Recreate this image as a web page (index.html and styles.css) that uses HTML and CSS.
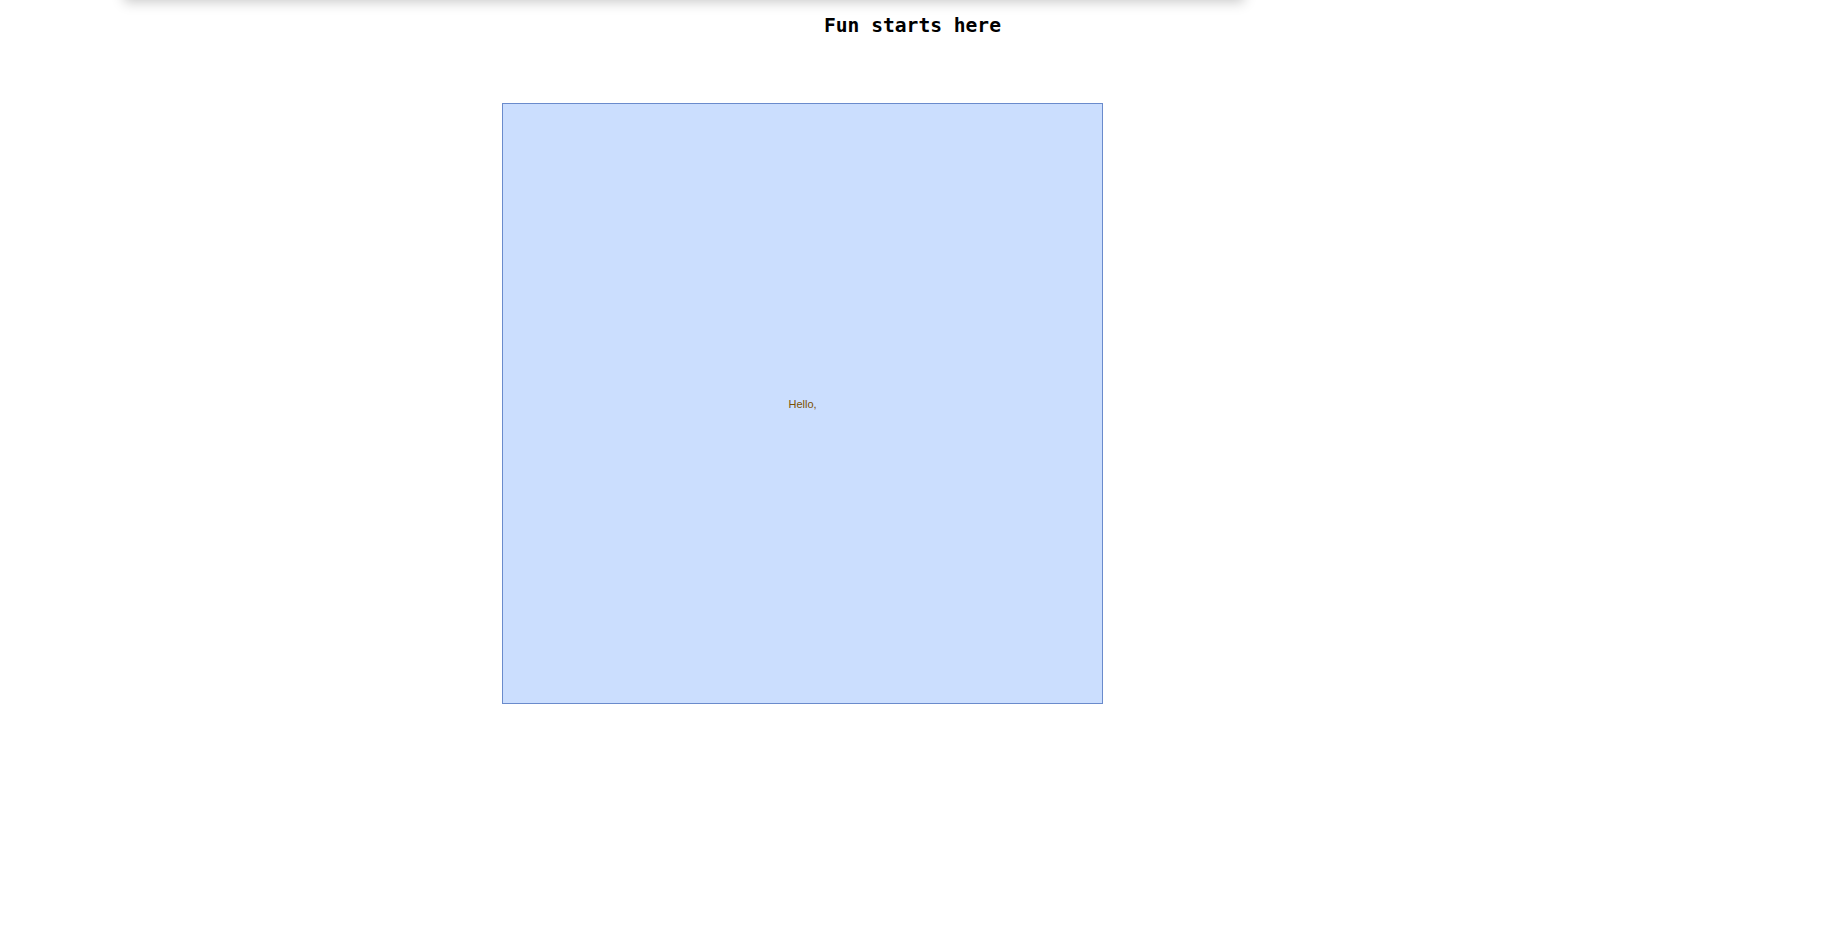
FILE: index.html
```html
<!DOCTYPE html>
<html>
<head>
<meta charset="utf-8">
<link rel="stylesheet" href="styles.css">
</head>
<body>
<div class="topbar"></div>
<h1 class="title">Fun starts here</h1>
<div class="stage">
  <div class="box"><span class="hello">Hello,</span></div>
</div>
</body>
</html>
```
FILE: styles.css
```css
html, body {
  margin: 0;
  padding: 0;
  background: #ffffff;
}
.topbar {
  position: absolute;
  top: -40px;
  left: 124px;
  width: 1120px;
  height: 40px;
  background: #ffffff;
  box-shadow: 0 2px 12px rgba(0, 0, 0, 0.22);
}
.title {
  margin: 0;
  padding-top: 14px;
  text-align: center;
  font-family: "DejaVu Sans Mono", "Liberation Mono", monospace;
  font-weight: bold;
  font-size: 19.6px;
  line-height: 24px;
  color: #000;
}
.stage {
  padding-top: 65px;
  padding-left: 502px;
}
.box {
  width: 599px;
  height: 599px;
  background: #cbdefe;
  border: 1px solid #6a8bcc;
  display: flex;
  align-items: center;
  justify-content: center;
}
.hello {
  font-family: "Liberation Sans", Arial, sans-serif;
  font-size: 11px;
  color: #7a5000;
}
```
